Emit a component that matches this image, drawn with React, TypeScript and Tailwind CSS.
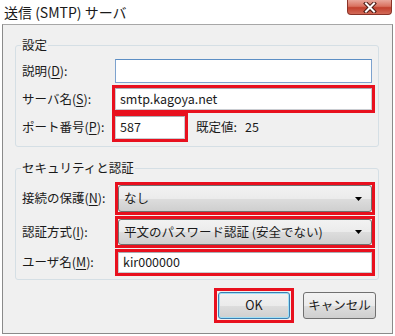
const font = { fontFamily: '"Noto Sans CJK JP", "Noto Sans", sans-serif' };

function U({ c }: { c: string }) {
  return <span className="underline underline-offset-[2px]">{c}</span>;
}

function Label({ w, children }: { w: string; children: React.ReactNode }) {
  return <div className={`${w} shrink-0 text-[12.5px] leading-none text-[#1a1a1a]`}>{children}</div>;
}

function Select({ value }: { value: string }) {
  return (
    <div className="flex h-full w-full items-center justify-between rounded-[3px] border border-[#707070] bg-[linear-gradient(#f2f2f2_0%,#ebebeb_50%,#dddddd_51%,#cfcfcf_100%)] pl-[5px] pr-[9px] text-[12.5px] text-[#1a1a1a]">
      <span>{value}</span>
      <svg width="7" height="4" viewBox="0 0 7 4">
        <path d="M0 0H7L3.5 4Z" fill="#000" />
      </svg>
    </div>
  );
}

function Input({ value }: { value?: string }) {
  return (
    <div className="flex h-full w-full items-center border border-[#c9ccd1] border-t-[#abadb3] bg-white pl-[4px] text-[12.5px] text-[#1a1a1a]">
      {value}
    </div>
  );
}

export default function App() {
  return (
    <div className="h-[336px] w-[395px] overflow-hidden bg-white" style={font}>
      <div className="flex h-[24px] items-start justify-between">
        <div className="pl-[4px] pt-[3px] text-[14px] leading-[18px] text-[#1a1a1a]">送信 (SMTP) サーバ</div>
        <div className="mr-[3px] flex h-[15px] w-[45px] items-center justify-center rounded-b-[4px] border border-t-0 border-[#8a3328] bg-[linear-gradient(#e9a79b_0%,#d9715f_45%,#c2402d_55%,#d26a58_100%)]">
          <svg width="14" height="11" viewBox="0 0 14 11">
            <path d="M3 1.5L11 9.5M11 1.5L3 9.5" stroke="#4a1a14" strokeWidth="4" strokeLinecap="square" />
            <path d="M3 1.5L11 9.5M11 1.5L3 9.5" stroke="#ffffff" strokeWidth="2" strokeLinecap="square" />
          </svg>
        </div>
      </div>

      <div className="ml-[2px] h-[310px] w-[391px] border border-[#8a8a8a] border-t-[#a7a7a7] bg-[#f0f0f0]">
        {/* 設定 */}
        <div className="relative ml-[12px] mt-[20px] h-[102px] w-[364px] rounded-[3px] border border-[#d5dfe5] pl-[6px]">
          <div className="absolute -top-[8px] left-[5px] bg-[#f0f0f0] px-[1px] text-[12.5px] leading-[14px] text-[#1a1a1a]">設定</div>
          <div className="mt-[13px] flex h-[24px] items-center">
            <Label w="w-[93px]">説明(<U c="D" />):</Label>
            <div className="h-[24px] w-[257px] border border-[#7da2ce] border-t-[#5c8ec4]">
              <div className="h-full w-full bg-white" />
            </div>
          </div>
          <div className="mt-[2px] flex h-[28px] items-center">
            <Label w="w-[90px]">サーバ名(<U c="S" />):</Label>
            <div className="h-[28px] w-[263px] border-[3px] border-[#e8101e]">
              <Input value="smtp.kagoya.net" />
            </div>
          </div>
          <div className="flex h-[29px] items-center">
            <Label w="w-[90px]">ポート番号(<U c="P" />):</Label>
            <div className="h-[29px] w-[76px] border-[3px] border-[#e8101e]">
              <Input value="587" />
            </div>
            <span className="ml-[8px] text-[12.5px] text-[#1a1a1a]">既定値:</span>
            <span className="ml-[8px] text-[12.5px] text-[#1a1a1a]">25</span>
          </div>
        </div>

        {/* セキュリティと認証 */}
        <div className="relative ml-[12px] mt-[21px] h-[112px] w-[364px] rounded-[3px] border border-[#d5dfe5] pl-[6px]">
          <div className="absolute -top-[8px] left-[5px] bg-[#f0f0f0] px-[1px] text-[12.5px] leading-[14px] text-[#1a1a1a]">セキュリティと認証</div>
          <div className="mt-[13px] flex h-[33px] items-center">
            <Label w="w-[93px]">接続の保護(<U c="N" />):</Label>
            <div className="h-[33px] w-[260px] border-[3px] border-[#e8101e]">
              <Select value="なし" />
            </div>
          </div>
          <div className="mt-[1px] flex h-[32px] items-center">
            <Label w="w-[93px]">認証方式(<U c="I" />):</Label>
            <div className="h-[32px] w-[260px] border-[3px] border-[#e8101e]">
              <Select value="平文のパスワード認証 (安全でない)" />
            </div>
          </div>
          <div className="mt-[1px] flex h-[27px] items-center">
            <Label w="w-[93px]">ユーザ名(<U c="M" />):</Label>
            <div className="h-[27px] w-[260px] border-[3px] border-[#e8101e]">
              <Input value="kir000000" />
            </div>
          </div>
        </div>

        <div className="mt-[8px] flex items-center justify-end gap-[9px] pr-[16px]">
          <div className="h-[35px] w-[80px] border-[3px] border-[#e8101e] p-[1px]">
            <div className="flex h-full w-full items-center justify-center rounded-[3px] border border-[#3c7fb1] bg-[linear-gradient(#f2f2f2_0%,#ebebeb_50%,#dddddd_51%,#cfcfcf_100%)] text-[12.5px] text-[#1a1a1a] shadow-[inset_0_0_0_1px_#9fe0f7]">
              OK
            </div>
          </div>
          <div className="flex h-[27px] w-[73px] items-center justify-center rounded-[3px] border border-[#707070] bg-[linear-gradient(#f2f2f2_0%,#ebebeb_50%,#dddddd_51%,#cfcfcf_100%)] text-[12.5px] text-[#1a1a1a]">
            キャンセル
          </div>
        </div>
      </div>
    </div>
  );
}
